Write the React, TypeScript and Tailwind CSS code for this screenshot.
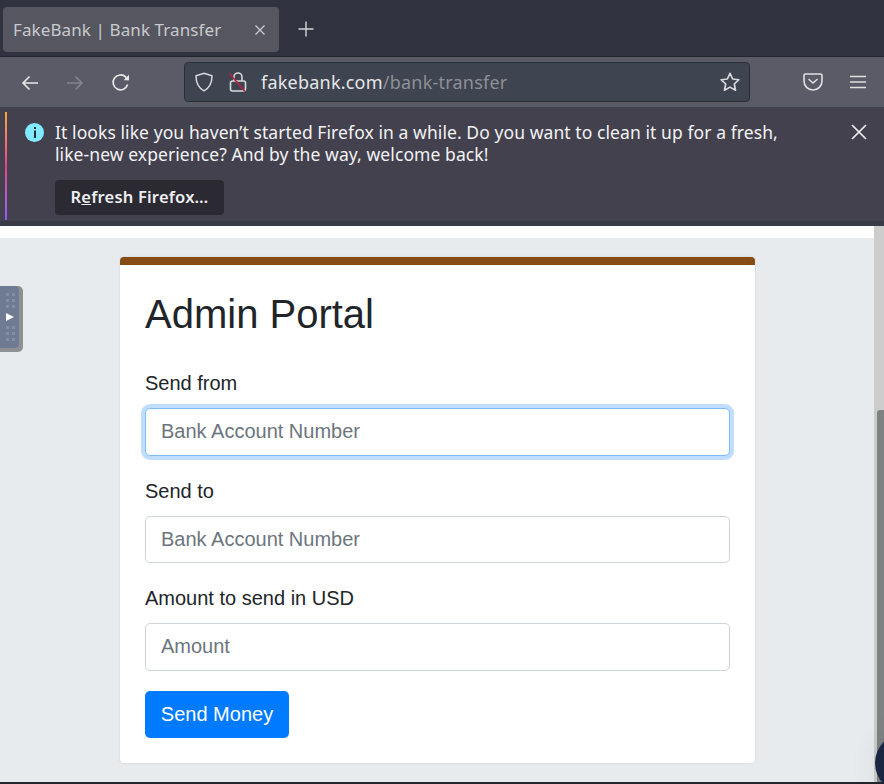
import React from "react";

const ui = { fontFamily: '"Noto Sans", "Open Sans", sans-serif' };
const page = { fontFamily: '"Liberation Sans", Arial, sans-serif' };

function Field({ label, placeholder, focused }: { label: string; placeholder: string; focused?: boolean }) {
  return (
    <div className="mb-[20px]">
      <label className="block text-[20px] leading-[30px] mb-[10px] text-[#212529]">{label}</label>
      <input
        readOnly
        placeholder={placeholder}
        className={
          "block w-full h-[47.5px] px-[15px] text-[20px] rounded-[5px] border bg-white outline-none placeholder:text-[#6c757d] " +
          (focused ? "border-[#80bdff] shadow-[0_0_0_4px_rgba(0,123,255,0.25)]" : "border-[#ced4da]")
        }
      />
    </div>
  );
}

export default function App() {
  return (
    <div className="w-[884px] h-[784px] overflow-hidden relative flex flex-col bg-white">
      {/* tab strip */}
      <div style={ui} className="h-[57px] shrink-0 bg-[#30333f] flex items-start pl-[3px] pt-[7px] border-b border-[#24262e]">
        <div className="w-[276px] h-[45px] rounded-[4px] bg-[#55565f] flex items-center pl-[10px] pr-[13px] justify-between">
          <span className="text-[17px] tracking-[0.1px] text-[#c9cacd]">FakeBank | Bank Transfer</span>
          <svg width="12" height="12" viewBox="0 0 12 12" stroke="#c9cacd" strokeWidth="1.3" fill="none"><path d="M1.5 1.5l9 9M10.5 1.5l-9 9" /></svg>
        </div>
        <svg className="ml-[19px] mt-[14px]" width="16" height="16" viewBox="0 0 16 16" stroke="#d4d5d8" strokeWidth="1.4" fill="none"><path d="M8 0.5v15M0.5 8h15" /></svg>
      </div>

      {/* toolbar */}
      <div style={ui} className="h-[50px] shrink-0 bg-[#5a5b66] flex items-center relative">
        <svg className="ml-[21px] mt-[2px]" width="18" height="16" viewBox="0 0 18 16" stroke="#e8e8ea" strokeWidth="1.6" fill="none"><path d="M17 8H2M8.5 1.5L2 8l6.5 6.5" /></svg>
        <svg className="ml-[27px] mt-[2px]" width="18" height="16" viewBox="0 0 18 16" stroke="#83848c" strokeWidth="1.6" fill="none"><path d="M1 8h15M9.5 1.5L16 8l-6.5 6.5" /></svg>
        <svg className="ml-[27px] mt-[2px]" width="20" height="20" viewBox="0 0 20 20" stroke="#e8e8ea" strokeWidth="1.7" fill="none"><path d="M16.6 11.5A7.4 7.4 0 1 1 14.8 4.2L17.5 6.8" /><path d="M18 1.8v5.4h-5.4z" fill="#e8e8ea" stroke="none" /></svg>
        <div className="ml-[53px] w-[566px] h-[40px] rounded-[4px] bg-[#3e4450] border border-[#2c2f38] flex items-center pl-[9px] pr-[8px]">
          <svg width="20" height="20" viewBox="0 0 20 20" stroke="#d8d9dc" strokeWidth="1.5" fill="none"><path d="M10 1.2l8 2.6c0 7-2 12-8 15-6-3-8-8-8-15z" /></svg>
          <svg className="ml-[14px]" width="20" height="22" viewBox="0 0 20 22" fill="none"><path d="M6 10V6a4 4 0 0 1 8 0v4" stroke="#d8d9dc" strokeWidth="1.6" /><rect x="2.5" y="10" width="15" height="10" rx="2" stroke="#d8d9dc" strokeWidth="1.6" /><path d="M1.5 2.5l15.5 18" stroke="#b8243f" strokeWidth="1.6" /></svg>
          <span className="ml-[13px] mt-[1px] text-[18px] tracking-[0.22px] text-[#e6e7e9] whitespace-nowrap">fakebank.com<span className="text-[#8d9096]">/bank-transfer</span></span>
          <svg className="ml-auto" width="22" height="22" viewBox="0 0 24 24" stroke="#d8d9dc" strokeWidth="1.8" strokeLinejoin="round" fill="none"><path d="M12 2.5l2.9 6.2 6.8.8-5 4.7 1.3 6.8L12 17.6l-6 3.4 1.3-6.8-5-4.7 6.8-.8z" /></svg>
        </div>
        <svg className="ml-[53px]" width="20" height="18" viewBox="0 0 20 18" stroke="#e0e1e3" strokeWidth="1.6" fill="none" strokeLinejoin="round"><path d="M2.5 1h15A1.5 1.5 0 0 1 19 2.5V8a9 9 0 0 1-18 0V2.5A1.5 1.5 0 0 1 2.5 1z" /><path d="M6 6.5l4 3.5 4-3.5" strokeLinecap="round" /></svg>
        <svg className="ml-[27px]" width="16" height="14" viewBox="0 0 16 14" stroke="#e0e1e3" strokeWidth="1.5" fill="none"><path d="M0 1.5h16M0 7h16M0 12.5h16" /></svg>
      </div>

      {/* notification bar */}
      <div style={ui} className="h-[119px] shrink-0 bg-[#42414d] border-b-[5px] border-[#383a46] flex pt-[5px] pl-[5px] relative">
        <div className="w-[2px] h-[108px] bg-gradient-to-b from-[#ffa436] via-[#e73f8a] to-[#9059ff]" />
        <div className="ml-[18px] mt-[11px] w-[19px] h-[19px] rounded-full bg-[#80ebff] flex items-center justify-center shrink-0">
          <svg width="4" height="11" viewBox="0 0 4 11" fill="#2b2a33"><rect x="1" y="0" width="2" height="2" /><rect x="1" y="3.5" width="2" height="7.5" /></svg>
        </div>
        <div className="ml-[11px] text-white">
          <p className="text-[17.5px] leading-[22px] text-[#f2f2f4] mt-[9px] whitespace-nowrap tracking-[0.08px]">
            It looks like you haven’t started Firefox in a while. Do you want to clean it up for a fresh,
            <br />
            like-new experience? And by the way, welcome back!
          </p>
          <button className="mt-[15px] h-[35px] w-[169px] rounded-[4px] bg-[#2b2a33] text-[16.5px] font-semibold text-[#eeeef0] tracking-[0.2px]">
            R<span className="underline">e</span>fresh Firefox…
          </button>
        </div>
        <svg className="absolute left-[851px] top-[17px]" width="16" height="16" viewBox="0 0 16 16" stroke="#f0f0f2" strokeWidth="1.7" fill="none"><path d="M1 1l14 14M15 1L1 15" /></svg>
      </div>

      {/* page */}
      <div style={page} className="flex-1 flex min-h-0 relative border-b-2 border-[#22252c]">
        <div className="flex-1 flex flex-col min-w-0">
          <div className="h-[12px] shrink-0 bg-white" />
          <div className="flex-1 bg-[#e8ebee] pl-[120px] pr-[119px] pt-[19px]">
            <div className="h-[506px] rounded-[4px] bg-white border-t-[8px] border-[#854d13] shadow-[0_0_2px_rgba(0,0,0,0.15)] px-[25px] pt-[25px]">
              <h1 className="text-[40px] leading-[48px] font-medium text-[#212529] mb-[30px]">Admin Portal</h1>
              <Field label="Send from" placeholder="Bank Account Number" focused />
              <Field label="Send to" placeholder="Bank Account Number" />
              <Field label="Amount to send in USD" placeholder="Amount" />
              <button className="h-[47.5px] w-[144px] rounded-[5px] bg-[#007bff] text-[20px] text-white">Send Money</button>
            </div>
          </div>
        </div>
        <div className="w-[10px] shrink-0 bg-[#cccccc] flex flex-col items-end pt-[184px]">
          <div className="w-[7px] flex-1 bg-[#7f8283] rounded-tl-[3px]" />
        </div>

        {/* floating drag handle */}
        <div className="absolute left-0 top-[60px] w-[23px] h-[66px] rounded-r-[5px] bg-[#8e9093]">
          <div className="w-[19px] h-[62px] rounded-r-[4px] bg-[#6e7b92] flex flex-col items-center justify-center gap-[5px] pl-[1px]">
            <div className="grid grid-cols-2 gap-x-[3px] gap-y-[3px]">
              {[0, 1, 2, 3, 4, 5].map((i) => <span key={i} className="w-[3px] h-[3px] bg-[#848fa3]" />)}
            </div>
            <svg width="8" height="8" viewBox="0 0 8 8" fill="#ffffff"><path d="M0 0l8 4-8 4z" /></svg>
            <div className="grid grid-cols-2 gap-x-[3px] gap-y-[3px]">
              {[0, 1, 2, 3, 4, 5].map((i) => <span key={i} className="w-[3px] h-[3px] bg-[#848fa3]" />)}
            </div>
          </div>
        </div>

        {/* chat bubble */}
        <div className="absolute left-[875px] top-[507px] w-[60px] h-[60px] rounded-full bg-[#1a2742] shadow-[0_0_30px_rgba(0,0,0,0.08)]" />
      </div>
    </div>
  );
}
